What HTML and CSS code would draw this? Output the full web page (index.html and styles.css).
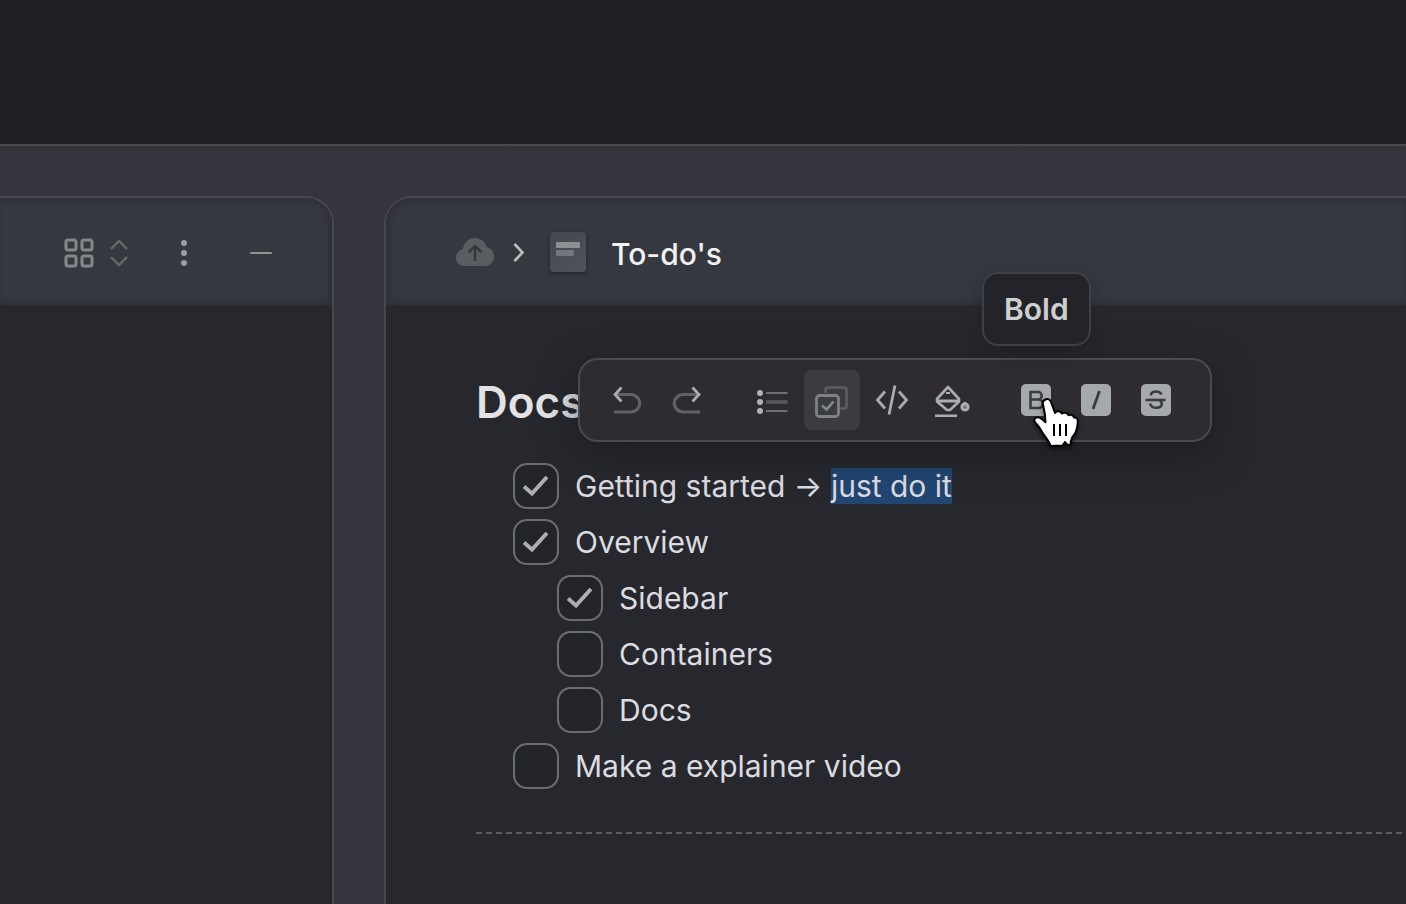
FILE: index.html
```html
<!DOCTYPE html>
<html lang="en">
<head>
<meta charset="utf-8">
<meta name="viewport" content="width=device-width, initial-scale=1">
<title>To-do's</title>
<link rel="stylesheet" href="styles.css">
</head>
<body class="app">
<header class="topbar"></header>
<div class="workspace">
  <aside class="panel panel-side">
    <div class="panel-head side-head">
      <button class="icon-btn view-btn" type="button" aria-label="Change view">
        <svg width="66" height="32" viewBox="0 0 66 32" fill="none">
          <g stroke="#84868a" stroke-width="3">
            <rect x="2" y="2" width="10" height="10" rx="2"/>
            <rect x="18" y="2" width="10" height="10" rx="2"/>
            <rect x="2" y="18" width="10" height="10" rx="2"/>
            <rect x="18" y="18" width="10" height="10" rx="2"/>
          </g>
          <path d="M47 11l8-8 8 8M47 19l8 8 8-8" stroke="#68696c" stroke-width="2.400"/>
        </svg>
      </button>
      <button class="icon-btn more-btn" type="button" aria-label="More">
        <svg width="8" height="32" viewBox="0 0 8 32" fill="#9b9da0"><circle cx="4" cy="5" r="3"/><circle cx="4" cy="15" r="3"/><circle cx="4" cy="25" r="3"/></svg>
      </button>
      <button class="icon-btn" type="button" aria-label="Collapse">
        <svg width="22" height="32" viewBox="0 0 22 32"><path d="M1 15h20" stroke="#8f9194" stroke-width="2" stroke-linecap="round"/></svg>
      </button>
    </div>
  </aside>

  <main class="panel panel-doc">
    <div class="panel-head doc-head">
      <button class="icon-btn" type="button" aria-label="Upload">
        <svg width="38" height="28" viewBox="0 0 38 28">
          <path d="M9 28C3.500 28 0 24.500 0 19.500C0 15 3 12 7 11C7.500 4.500 12.500 0 19 0C24.500 0 29 3.500 30.500 9C35 10 38 13.500 38 18.500C38 24 34 28 29 28Z" fill="#595c61"/>
          <path d="M19 23V9M12.500 14.500L19 8l6.500 6.500" fill="none" stroke="#35373d" stroke-width="2.500"/>
        </svg>
      </button>
      <svg class="crumb-sep" width="12" height="20" viewBox="0 0 12 20" fill="none"><path d="M1.500 2l8 8.500-8 8.500" stroke="#bcbdbf" stroke-width="2.600"/></svg>
      <span class="doc-icon"><i class="line line-long"></i><i class="line line-short"></i></span>
      <h1 class="doc-title">To-do's</h1>
    </div>

    <div class="doc-body">
      <h2 class="section-title">Docs</h2>
      <ul class="todos">
        <li class="todo">
          <span class="check"><input class="box" id="t1" type="checkbox" checked><svg class="tick" viewBox="0 0 26 22"><path d="M1 11.500l8 7L24 2"/></svg></span>
          <label class="text" for="t1">Getting started → <mark class="selected">just do it</mark></label>
        </li>
        <li class="todo">
          <span class="check"><input class="box" id="t2" type="checkbox" checked><svg class="tick" viewBox="0 0 26 22"><path d="M1 11.500l8 7L24 2"/></svg></span>
          <label class="text" for="t2">Overview</label>
        </li>
        <li class="todo nested">
          <span class="check"><input class="box" id="t3" type="checkbox" checked><svg class="tick" viewBox="0 0 26 22"><path d="M1 11.500l8 7L24 2"/></svg></span>
          <label class="text" for="t3">Sidebar</label>
        </li>
        <li class="todo nested">
          <span class="check"><input class="box" id="t4" type="checkbox"></span>
          <label class="text" for="t4">Containers</label>
        </li>
        <li class="todo nested">
          <span class="check"><input class="box" id="t5" type="checkbox"></span>
          <label class="text" for="t5">Docs</label>
        </li>
        <li class="todo">
          <span class="check"><input class="box" id="t6" type="checkbox"></span>
          <label class="text" for="t6">Make a explainer video</label>
        </li>
      </ul>
      <hr class="divider">
    </div>

    <div class="toolbar" role="toolbar" aria-label="Formatting">
      <div class="group">
        <button class="tool" type="button" aria-label="Undo">
          <svg width="32" height="32" viewBox="0 0 32 32" fill="none"><path d="M4 10.500H19a8.700 8.700 0 0 1 0 17.500H2" stroke="#606266" stroke-width="3.200"/><path d="M9.500 3.500L3 10.500l6.500 7" stroke="#aaacaf" stroke-width="2.800"/></svg>
        </button>
        <button class="tool" type="button" aria-label="Redo">
          <svg width="32" height="32" viewBox="0 0 32 32" fill="none"><path d="M27 10.500H11a8.700 8.700 0 0 0 0 17.500H28" stroke="#606266" stroke-width="3.200"/><path d="M20.500 3.500L27 10.500l-6.500 7" stroke="#aaacaf" stroke-width="2.800"/></svg>
        </button>
      </div>
      <div class="group">
        <button class="tool" type="button" aria-label="List">
          <svg width="32" height="32" viewBox="0 0 32 32"><g fill="#b0b2b5"><circle cx="4" cy="9" r="3"/><circle cx="4" cy="18" r="3"/><circle cx="4" cy="27" r="3"/></g><path d="M10 9h21.500M10 27h21.500" stroke="#6d6f73" stroke-width="2"/><path d="M10 18h21.500" stroke="#56585c" stroke-width="3.500"/></svg>
        </button>
        <button class="tool active" type="button" aria-label="Checklist" aria-pressed="true">
          <svg width="36" height="36" viewBox="0 0 36 36" fill="none"><path d="M11.500 11V8a2.500 2.500 0 0 1 2.500-2.500H30a2.500 2.500 0 0 1 2.500 2.500v16a2.500 2.500 0 0 1-2.500 2.500h-4" stroke="#5b5f62" stroke-width="2.600"/><rect x="2.500" y="13.500" width="22" height="21" rx="3" stroke="#7e8285" stroke-width="2.800"/><path d="M8 23.500l4.500 4 7-8" stroke="#85898c" stroke-width="2.600"/></svg>
        </button>
        <button class="tool" type="button" aria-label="Code">
          <svg width="34" height="32" viewBox="0 0 34 32" fill="none" stroke="#aaacaf" stroke-width="2.800"><path d="M10 7.500L2.500 16l7.500 8.500M24 7.500l7.500 8.500-7.500 8.500M20 1.500l-6 29"/></svg>
        </button>
        <button class="tool" type="button" aria-label="Fill">
          <svg width="36" height="34" viewBox="0 0 36 34" fill="none" stroke="#abadb0"><path d="M14 4L25 16v2.500L16 27h-3L3 18.500V16z" stroke-width="2.600" stroke-linejoin="round"/><path d="M3 18h23" stroke-width="3"/><path d="M12 10h4" stroke-width="2"/><path d="M1 33h22" stroke-width="3"/><circle cx="31" cy="24" r="3.200" stroke-width="2.800" fill="#707276"/><path d="M31 19v2" stroke-width="3"/></svg>
        </button>
      </div>
      <div class="group">
        <button class="tool" type="button" aria-label="Bold" aria-describedby="bold-tip">
          <svg width="30" height="32" viewBox="0 0 30 32" fill="none"><rect width="30" height="32" rx="5" fill="#a5a8ad"/><path d="M9.500 8h7.500a3.700 3.700 0 0 1 0 7.500H9.500zM9.500 15.500h8a4.200 4.200 0 0 1 0 8.500h-8z" stroke="#3b3b3f" stroke-width="2.600"/></svg>
        </button>
        <button class="tool" type="button" aria-label="Italic">
          <svg width="30" height="32" viewBox="0 0 30 32" fill="none"><rect width="30" height="32" rx="5" fill="#a5a8ad"/><path d="M18.500 7l-6.500 18" stroke="#3b3b3f" stroke-width="2.800"/></svg>
        </button>
        <button class="tool" type="button" aria-label="Strikethrough">
          <svg width="30" height="32" viewBox="0 0 30 32" fill="none"><rect width="30" height="32" rx="5" fill="#a5a8ad"/><path d="M20.500 10.500C19.500 8.500 17.500 7.500 15 7.500c-3 0-5 1.500-5.200 3.800M9 19.500c.8 2.700 3 4.300 6.200 4.300 3.500 0 5.600-1.600 5.600-4 0-1.600-.8-2.800-2.300-3.300" stroke="#3b3b3f" stroke-width="2.600"/><path d="M4.500 16h20" stroke="#3b3b3f" stroke-width="2.600"/></svg>
        </button>
      </div>
      <div class="tooltip" id="bold-tip" role="tooltip">Bold</div>
      <svg class="pointer" width="50" height="54" viewBox="0 0 50 54">
        <path d="M13.500 3.500c2.500-1 4.600 0 5.500 2.500l4 11c1.500-2.500 5.500-2.500 7 .5 1.800-1.500 5.500-1 6.500 1.700 2-1 5-.2 5.500 2.300 2-.5 3.800.8 3.800 3.300 0 5-1 9.500-3.200 13.500-2.800 3-3.800 5-4 9.500-.3 2-3.600 2-5.600-1.800l-2.500 3.500-12 .5c-.5-3.500-4-7.500-7.500-12.500C8.500 32.500 6 29.500 3.200 26.500c-2.500-3 .8-6.500 4.300-4.800 2.300 1.200 4 2.600 6 4.600L13 19 11 8.500c-.6-2.200.2-4.100 2.500-5z" fill="#fff" stroke="#000" stroke-width="2" stroke-linejoin="round"/>
        <path d="M22 28v12M28 28v12M34 28v12" stroke="#000" stroke-width="2"/>
      </svg>
    </div>
  </main>
</div>
</body>
</html>
```

FILE: styles.css
```css
* { box-sizing: border-box; }

.app {
  margin: 0;
  min-height: 100vh;
  display: flex;
  flex-direction: column;
  overflow: hidden;
  background: #37343e;
  color: #dcdce0;
  font-family: Inter, "Noto Sans", sans-serif;
  font-size: 30px;
}

.topbar {
  height: 146px;
  flex: none;
  background: #202126;
  border-bottom: 2px solid #49474d;
}

.workspace {
  flex: 1;
  display: flex;
  gap: 50px;
  padding-top: 50px;
  background: linear-gradient(#353239, #37343e 16px);
}

.panel {
  position: relative;
  background: #27282d;
  border: 2px solid #48484c;
  border-bottom: 0;
}

.panel-side {
  flex: none;
  width: 334px;
  border-left: 0;
  border-radius: 0 28px 0 0;
}

.panel-doc {
  flex: 1;
  min-width: 0;
  border-right: 0;
  border-radius: 28px 0 0 0;
}

.panel-head {
  display: flex;
  align-items: center;
  height: 108px;
  background: #35383f;
}

.side-head {
  justify-content: flex-end;
  padding: 4px 60px 0 0;
  border-radius: 0 26px 0 0;
  box-shadow: inset -6px 0 6px -4px #303136, inset 0 6px 6px -4px #303136, inset 0 -6px 6px -4px #2c2c33;
}

.doc-head {
  padding-left: 70px;
  border-radius: 26px 0 0 0;
  box-shadow: inset 6px 0 6px -4px #303136, inset 0 6px 6px -4px #303136, inset 0 -6px 6px -4px #2c2c33;
}

.icon-btn {
  display: flex;
  padding: 0;
  border: 0;
  background: none;
}

.view-btn { margin-right: 50px; }
.more-btn { margin-right: 62px; }
.crumb-sep { margin-left: 19px; }

.doc-icon {
  display: flex;
  flex-direction: column;
  gap: 2px;
  width: 36px;
  height: 40px;
  margin-left: 25px;
  padding: 10px 6px;
  border-radius: 4px;
  background: linear-gradient(150deg, #43464d, #51545c);
  box-shadow: 0 2px 4px #25262b;
}

.line {
  height: 6px;
  border-radius: 1px;
}

.line-long { width: 24px; background: #8c8f94; }
.line-short { width: 18px; background: #73767c; }

.doc-title {
  margin: 0;
  padding: 3px 0 0 25px;
  color: #f2f2f3;
  font-size: 30px;
  font-weight: 500;
}

.doc-body { padding: 68px 0 0 90px; }

.section-title {
  margin: 0;
  color: #e3e3e6;
  font-size: 44px;
  line-height: 56px;
  font-weight: 600;
}

.todos {
  margin: 28px 0 0 37px;
  padding: 0;
  list-style: none;
}

.todo {
  display: flex;
  align-items: center;
  gap: 16px;
  height: 56px;
}

.nested { padding-left: 44px; }

.check {
  display: grid;
  place-items: center;
}

.check > * { grid-area: 1 / 1; }

.box {
  appearance: none;
  width: 46px;
  height: 46px;
  margin: 0;
  border: 2px solid #6a6e72;
  border-radius: 14px;
  background: #232429;
}

.tick {
  width: 26px;
  height: 22px;
  fill: none;
  stroke: #adaeb2;
  stroke-width: 4;
  pointer-events: none;
}

.selected {
  background: #214672;
  color: inherit;
}

.divider {
  height: 2px;
  margin: 38px 0 0;
  border: 0;
  background: repeating-linear-gradient(90deg, #5b5b60 0 6px, transparent 6px 10px);
}

.toolbar {
  position: absolute;
  top: 160px;
  left: 192px;
  display: flex;
  gap: 28px;
  padding: 10px 26px 10px 20px;
  border: 2px solid #4a4b4f;
  border-radius: 20px;
  background: #2e2c31;
  box-shadow: 0 12px 36px rgba(20, 20, 26, 0.5);
}

.group {
  display: flex;
  gap: 4px;
}

.tool {
  display: grid;
  place-items: center;
  width: 56px;
  height: 60px;
  padding: 0;
  border: 0;
  border-radius: 8px;
  background: none;
}

.active { background: #3b3c40; }

.tooltip {
  position: absolute;
  top: -88px;
  left: 402px;
  padding: 16px 20px;
  border: 2px solid #3f4045;
  border-radius: 16px;
  background: #232429;
  box-shadow: 0 4px 16px rgba(20, 20, 26, 0.3);
  color: #cfcfd0;
  font-size: 30px;
  font-weight: 600;
  line-height: 38px;
}

.pointer {
  position: absolute;
  top: 36px;
  left: 452px;
  filter: drop-shadow(0 3px 2px rgba(0, 0, 0, 0.5));
}
```
